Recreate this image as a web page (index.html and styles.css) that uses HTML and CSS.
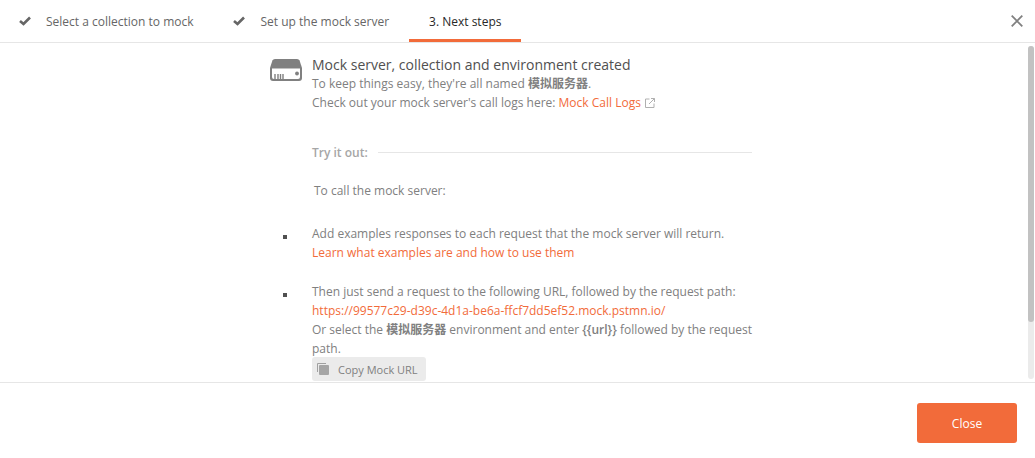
FILE: index.html
```html
<!DOCTYPE html>
<html>
<head>
	<meta charset="utf-8">
	<title>Mock server</title>
	<link rel="stylesheet" href="styles.css">
</head>
<body>
	<div class="modal">
		<div class="header">
			<ul class="steps">
				<li class="step">
					<svg class="check" width="14" height="10" viewBox="0 0 14 10"><path d="M2 5l3.500 3L12 1.500" fill="none" stroke="#666" stroke-width="2.600"/></svg>
					<span>Select a collection to mock</span>
				</li>
				<li class="step">
					<svg class="check" width="14" height="10" viewBox="0 0 14 10"><path d="M2 5l3.500 3L12 1.500" fill="none" stroke="#666" stroke-width="2.600"/></svg>
					<span>Set up the mock server</span>
				</li>
				<li class="step active">3. Next steps</li>
			</ul>
			<button class="dismiss" type="button" aria-label="Close dialog">
				<svg width="12" height="12" viewBox="0 0 12 12"><path d="M.7.7l10.600 10.600M11.300.7L.7 11.300" fill="none" stroke="#808080" stroke-width="1.800"/></svg>
			</button>
		</div>

		<div class="body">
			<div class="scroller">
				<div class="content">
					<div class="created">
						<svg class="server" width="32" height="22" viewBox="0 0 32 22">
							<path d="M5 0h22q2 0 2.600 1.600L32 9v10q0 3-3 3H3q-3 0-3-3V9l2.400-7.400Q3 0 5 0z" fill="#808080"/>
							<path d="M2 9.500h28V18q0 2-2 2H4q-2 0-2-2z" fill="#fff"/>
							<path d="M5 15v5M8 15v5M10.500 15v5M13 15v5" stroke="#808080" stroke-width="1.400"/>
							<circle cx="27" cy="14.500" r="1.900" fill="#808080"/>
						</svg>
						<div>
							<h1>Mock server, collection and environment created</h1>
							<p>To keep things easy, they're all named <b>模拟服务器</b>.</p>
							<p>Check out your mock server's call logs here: <a href="#">Mock Call Logs<svg class="external" width="10" height="10" viewBox="0 0 10 10"><path d="M4.500 1H.5v8.500H9V5.500M6 .5h3.500V4M9.500.5L4 6" fill="none" stroke="#b0b0b0"/></svg></a></p>
						</div>
					</div>

					<h2 class="divider">Try it out:</h2>
					<p class="intro">To call the mock server:</p>

					<ul class="hints">
						<li>
							<p>Add examples responses to each request that the mock server will return.</p>
							<p><a href="#">Learn what examples are and how to use them</a></p>
						</li>
						<li>
							<p>Then just send a request to the following URL, followed by the request path:</p>
							<p><a href="#">https://99577c29-d39c-4d1a-be6a-ffcf7dd5ef52.mock.pstmn.io/</a></p>
							<p>Or select the <b>模拟服务器</b> environment and enter <b>{{url}}</b> followed by the request path.</p>
							<button class="copy" type="button">
								<svg width="12" height="12" viewBox="0 0 12 12"><path d="M.5 9V.5H9" fill="none" stroke="#a0a0a0"/><rect x="2" y="2" width="10" height="10" rx="1" fill="#a5a5a5"/></svg>
								Copy Mock URL
							</button>
						</li>
					</ul>
				</div>
			</div>
			<div class="track"><div class="thumb"></div></div>
		</div>

		<div class="footer">
			<button class="close" type="button">Close</button>
		</div>
	</div>
</body>
</html>
```
FILE: styles.css
```css
*{
	margin: 0;
	padding: 0;
	box-sizing: border-box;
}
body{
	font: 12px/19px "Open Sans", "Noto Sans CJK SC", sans-serif;
	color: #808080;
	background: #fff;
}
ul{
	list-style: none;
}
b{
	font-weight: 600;
}
a{
	color: #f26b3a;
	text-decoration: none;
}
button{
	border: 0;
	font-family: inherit;
	cursor: pointer;
}
.modal{
	height: 100vh;
	display: flex;
	flex-direction: column;
}

/* steps */
.header{
	display: flex;
	justify-content: space-between;
	height: 43px;
	flex: none;
	border-bottom: 1px solid #e6e6e6;
	padding-right: 12px;
}
.steps{
	display: flex;
	gap: 20px;
}
.step{
	display: flex;
	align-items: center;
	padding: 0 18px;
	color: #666;
}
.step:nth-child(2){
	padding-left: 0;
}
.check{
	margin-right: 14px;
}
.step:nth-child(2) .check{
	margin-right: 15px;
}
.steps .active{
	padding: 3px 20px 0;
	margin-left: -18px;
	border-bottom: 3px solid #f26b3a;
	color: #282828;
}
.dismiss{
	display: flex;
	align-items: center;
	background: none;
	width: 12px;
}

/* content */
.body{
	flex: 1;
	min-height: 0;
	position: relative;
}
.scroller{
	height: 100%;
	overflow-y: auto;
	scrollbar-width: none;
	padding: 12px 13px 0 0;
}
.content{
	max-width: 482px;
	margin: 0 auto;
}
.created{
	display: flex;
	gap: 10px;
}
.server{
	flex: none;
	margin-top: 4px;
}
h1{
	font-size: 14px;
	line-height: 19px;
	font-weight: normal;
	color: #505050;
}
.external{
	margin-left: 4px;
	vertical-align: -1px;
}
.divider{
	display: flex;
	align-items: center;
	gap: 10px;
	margin: 31px 0 19px 42px;
	font-size: 12px;
	font-weight: 600;
	color: #a6a6a6;
}
.divider::after{
	content: "";
	flex: 1;
	height: 1px;
	background: #e6e6e6;
}
.intro{
	margin-left: 44px;
}
.hints li{
	position: relative;
	margin-top: 20px;
	padding-left: 42px;
}
.hints li:first-child{
	margin-top: 24px;
}
.hints li::before{
	content: "";
	position: absolute;
	left: 13px;
	top: 11px;
	width: 4px;
	height: 4px;
	background: #505050;
}
.copy{
	display: flex;
	align-items: center;
	gap: 9px;
	height: 24px;
	margin-top: -1px;
	padding: 0 8px 0 5px;
	border-radius: 3px;
	background: #ebebeb;
	color: #808080;
	font-size: 11px;
}
.track{
	position: absolute;
	top: 3px;
	right: 1px;
	bottom: 3px;
	width: 6px;
	border-radius: 3px;
	background: #ebebeb;
}
.thumb{
	height: 83%;
	border-radius: 3px;
	background: #c2c2c2;
}

/* footer */
.footer{
	display: flex;
	justify-content: flex-end;
	flex: none;
	padding: 20px 18px 15px;
	border-top: 1px solid #e6e6e6;
}
.close{
	width: 100px;
	height: 40px;
	border-radius: 3px;
	background: #f26b3a;
	color: #fff;
	font-size: 12px;
}
```
